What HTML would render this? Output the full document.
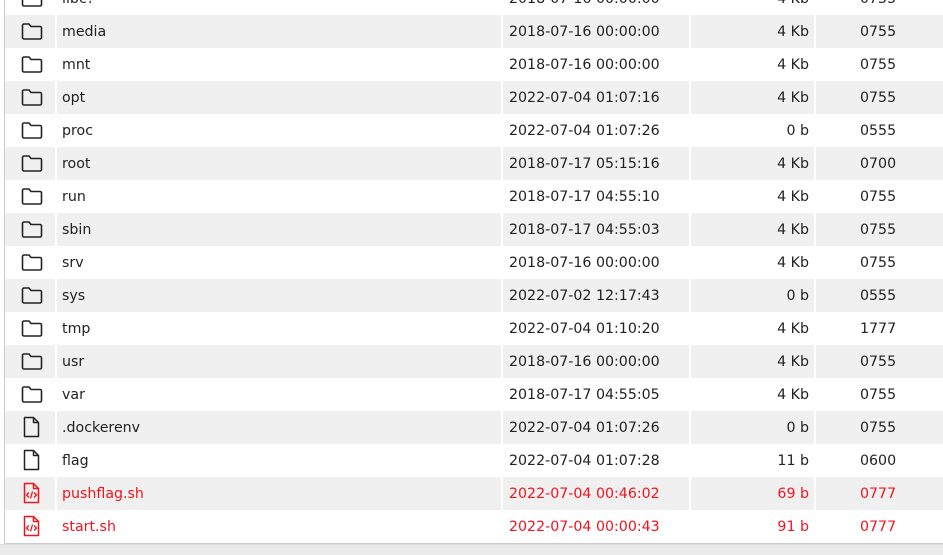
<!DOCTYPE html>
<html><head><meta charset="utf-8"><style>
*{margin:0;padding:0;box-sizing:border-box}
body{width:943px;height:555px;overflow:hidden;background:#fff;font-family:"DejaVu Sans","Liberation Sans",sans-serif;font-size:14.2px;color:#222;position:relative}
.wrap{position:absolute;left:4px;top:-18px;width:939px;border-left:1px solid #ccc;border-bottom:2px solid #ccc}
.row{height:33px;position:relative;white-space:nowrap}
.row.g{background:#f0f0f0}
.row span{position:absolute;top:9px;line-height:17px}
.sep{position:absolute;top:0;bottom:0;width:2px;background:#fff}
.ic{position:absolute;left:16px;top:6px}
.n{left:57px}.d{left:504px}.s{right:134px;text-align:right}.p{left:855px}
.r{color:#f0141e}
.bottom{position:absolute;left:0;top:544px;width:943px;height:11px;background:#ebebeb;border-top:1px solid #ddd}
</style></head><body>
<div class="wrap" id="w"></div>
<div class="bottom"></div>
<script>
var F='<svg class="ic" width="22" height="20" viewBox="0 0 22 20"><path d="M1.5 4.5 a1.5 1.5 0 0 1 1.5-1.5 h5 l2 2.5 h9 a1.5 1.5 0 0 1 1.5 1.5 v9.5 a1.5 1.5 0 0 1-1.5 1.5 h-16 a1.5 1.5 0 0 1-1.5-1.5z" fill="none" stroke="#222" stroke-width="1.6" stroke-linejoin="round"/></svg>';
var D='<svg class="ic" width="22" height="22" viewBox="0 0 22 22" style="top:5px"><path d="M3.5 1.5 h9 l5 5 v14 h-14z M12.5 1.5 v5 h5" fill="none" stroke="#222" stroke-width="1.5" stroke-linejoin="round"/></svg>';
var S='<svg class="ic" width="22" height="22" viewBox="0 0 22 22" style="top:5px"><path d="M3.5 1.5 h9 l5 5 v14 h-14z M12.5 1.5 v5 h5" fill="none" stroke="#f0141e" stroke-width="1.5" stroke-linejoin="round"/><path d="M8 10.5 l-2.5 2.5 2.5 2.5 M13 10.5 l2.5 2.5 -2.5 2.5 M11.5 9.5 l-2 7" fill="none" stroke="#f0141e" stroke-width="1.3"/></svg>';
var rows=[["libc?","2018-07-16 00:00:00","4 Kb","0755",F],
["media","2018-07-16 00:00:00","4 Kb","0755",F],
["mnt","2018-07-16 00:00:00","4 Kb","0755",F],
["opt","2022-07-04 01:07:16","4 Kb","0755",F],
["proc","2022-07-04 01:07:26","0 b","0555",F],
["root","2018-07-17 05:15:16","4 Kb","0700",F],
["run","2018-07-17 04:55:10","4 Kb","0755",F],
["sbin","2018-07-17 04:55:03","4 Kb","0755",F],
["srv","2018-07-16 00:00:00","4 Kb","0755",F],
["sys","2022-07-02 12:17:43","0 b","0555",F],
["tmp","2022-07-04 01:10:20","4 Kb","1777",F],
["usr","2018-07-16 00:00:00","4 Kb","0755",F],
["var","2018-07-17 04:55:05","4 Kb","0755",F],
[".dockerenv","2022-07-04 01:07:26","0 b","0755",D],
["flag","2022-07-04 01:07:28","11 b","0600",D],
["pushflag.sh","2022-07-04 00:46:02","69 b","0777",S],
["start.sh","2022-07-04 00:00:43","91 b","0777",S]];
var h='';
rows.forEach(function(r,i){
var red=r[4]===S?' r':'';
h+='<div class="row'+(i%2?' g':'')+red+'">'+r[4]+'<div class="sep" style="left:50px"></div><div class="sep" style="left:496px"></div><div class="sep" style="left:684px"></div><div class="sep" style="left:809px"></div><span class="n">'+r[0]+'</span><span class="d">'+r[1]+'</span><span class="s">'+r[2]+'</span><span class="p">'+r[3]+'</span></div>';
});
document.getElementById('w').innerHTML=h;
</script>
</body></html>
